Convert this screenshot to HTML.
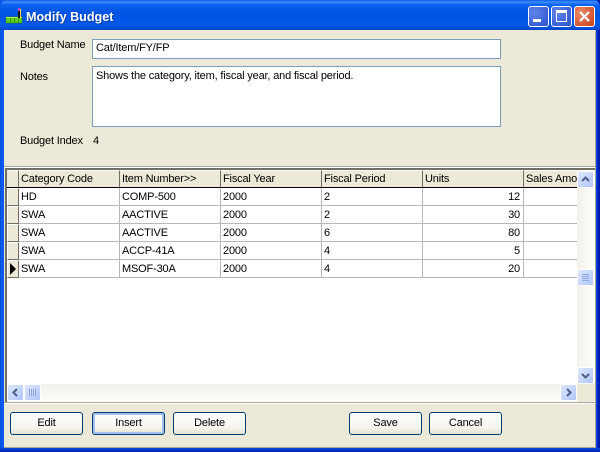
<!DOCTYPE html>
<html><head><meta charset="utf-8"><style>
*{box-sizing:border-box}
html,body{margin:0;padding:0}
body{width:600px;height:452px;position:relative;overflow:hidden;background:linear-gradient(90deg,#0842d0 0,#0c5cf0 1px,#0a58ec 3px,#0a50e4 596px,#0636d0 597px,#0018a8 599px);font:11px/14px "Liberation Sans",sans-serif;letter-spacing:-.17px;color:#000}
.a{position:absolute}
.t{position:absolute;white-space:nowrap;line-height:14px}
#tb{left:0;top:0;width:600px;height:30px;border-radius:7px 7px 0 0;background:linear-gradient(#0a5ae8 0,#3a8cf8 2px,#0a60ee 5px,#0254e2 14px,#0258ea 24px,#0450d8 28px,#0346c8 30px)}
#bb{left:0;top:448px;width:600px;height:4px;background:linear-gradient(#0a48dc,#0634c4 2px,#001ca8)}
#cl{left:4px;top:30px;width:592px;height:418px;background:#ece9d8;border-right:1px solid #aca899;border-bottom:1px solid #aca899}
.in{position:absolute;background:#fff;border:1px solid #7f9db9}
.h{position:absolute;background:#ece9d8;border-right:1px solid #716f64;border-bottom:1px solid #000;border-top:1px solid #fff;height:18px;padding:1px 0 0 2px;white-space:nowrap;overflow:hidden;top:170px}
.rh{position:absolute;left:7px;width:12px;height:18px;background:#ece9d8;border-top:1px solid #fff;border-left:1px solid #fff;border-right:1px solid #716f64;border-bottom:1px solid #716f64}
.c{position:absolute;height:18px;background:#fff;border-right:1px solid #b8b8b8;border-bottom:1px solid #b8b8b8;padding:2px 2px 0 2px;white-space:nowrap;overflow:hidden}
.r{text-align:right;padding-right:3px}
.sb{position:absolute;width:17px;height:17px;border:1px solid #fff;border-radius:2px;background:linear-gradient(135deg,#dde7fe,#b0c6fa)}
.btn{position:absolute;top:412px;width:73px;height:23px;border:1px solid #003c74;border-radius:3px;background:linear-gradient(#fff,#f5f4ee 70%,#e4e1d4);text-align:center;line-height:21px}
.wb{position:absolute;top:6px;width:21px;height:21px;border:1px solid #fff;border-radius:3px}
</style></head><body>
<div class="a" id="tb"></div>
<div class="a" id="bb"></div>
<svg class="a" style="left:5px;top:6px" width="18" height="18" viewBox="0 0 18 18"><rect x="1" y="11" width="16" height="6" fill="#5ed01a" stroke="#2f7a08" stroke-width=".6"/><rect x="1" y="11" width="16" height="1" fill="#b6f050"/><path d="M5.500 12v5M9.500 12v5M13.500 12v5" stroke="#3b9a10"/><rect x="13" y="2" width="2" height="10" fill="#111"/><rect x="13" y="2" width="2" height="3" fill="#d040c0"/><rect x="15" y="3" width="1" height="9" fill="#e8d040"/></svg>
<div class="t" style="left:26px;top:10px;color:#fff;font-weight:bold;font-size:12.6px;letter-spacing:0;line-height:15px;text-shadow:1px 1px 0 #0a3ca8">Modify Budget</div>
<div class="wb" style="left:528px;background:radial-gradient(circle at 30% 30%,#5f86ea,#2a50cc)"><div class="a" style="left:4px;top:12px;width:8px;height:3px;background:#fff"></div></div>
<div class="wb" style="left:551px;background:radial-gradient(circle at 30% 30%,#5f86ea,#2a50cc)"><div class="a" style="left:4px;top:3px;width:11px;height:12px;border:1px solid #fff;border-top-width:3px"></div></div>
<div class="wb" style="left:574px;background:radial-gradient(circle at 30% 30%,#ea8a68,#c84018)"><svg class="a" style="left:3px;top:3px" width="13" height="13"><path d="M2 2L11 11M11 2L2 11" stroke="#fff" stroke-width="2.2"/></svg></div>

<div class="a" id="cl"></div>
<div class="t" style="left:20px;top:38px">Budget Name</div>
<div class="in" style="left:92px;top:39px;width:409px;height:20px"></div>
<div class="t" style="left:96px;top:41px">Cat/Item/FY/FP</div>
<div class="t" style="left:20px;top:70px">Notes</div>
<div class="in" style="left:92px;top:66px;width:409px;height:61px"></div>
<div class="t" style="left:96px;top:69px">Shows the category, item, fiscal year, and fiscal period.</div>
<div class="t" style="left:20px;top:134px">Budget Index</div>
<div class="t" style="left:93px;top:134px">4</div>

<div class="a" style="left:4px;top:166px;width:591px;height:1px;background:#aca899"></div>
<div class="a" style="left:4px;top:167px;width:591px;height:1px;background:#fff"></div>
<div class="a" style="left:5px;top:168px;width:590px;height:234px;background:#fff;border-left:2px solid #716f64;border-top:2px solid #716f64"></div>

<div class="h" style="left:7px;width:12px"></div>
<div class="h" style="left:19px;width:101px">Category Code</div>
<div class="h" style="left:120px;width:101px">Item Number&gt;&gt;</div>
<div class="h" style="left:221px;width:101px">Fiscal Year</div>
<div class="h" style="left:322px;width:101px">Fiscal Period</div>
<div class="h" style="left:423px;width:101px">Units</div>
<div class="h" style="left:524px;width:53px;border-right:0">Sales Amo</div>

<div class="rh" style="top:188px"></div><div class="c" style="left:19px;top:188px;width:101px">HD</div><div class="c" style="left:120px;top:188px;width:101px">COMP-500</div><div class="c" style="left:221px;top:188px;width:101px">2000</div><div class="c" style="left:322px;top:188px;width:101px">2</div><div class="c r" style="left:423px;top:188px;width:101px">12</div><div class="c" style="left:524px;top:188px;width:53px;border-right:0"></div>
<div class="rh" style="top:206px"></div><div class="c" style="left:19px;top:206px;width:101px">SWA</div><div class="c" style="left:120px;top:206px;width:101px">AACTIVE</div><div class="c" style="left:221px;top:206px;width:101px">2000</div><div class="c" style="left:322px;top:206px;width:101px">2</div><div class="c r" style="left:423px;top:206px;width:101px">30</div><div class="c" style="left:524px;top:206px;width:53px;border-right:0"></div>
<div class="rh" style="top:224px"></div><div class="c" style="left:19px;top:224px;width:101px">SWA</div><div class="c" style="left:120px;top:224px;width:101px">AACTIVE</div><div class="c" style="left:221px;top:224px;width:101px">2000</div><div class="c" style="left:322px;top:224px;width:101px">6</div><div class="c r" style="left:423px;top:224px;width:101px">80</div><div class="c" style="left:524px;top:224px;width:53px;border-right:0"></div>
<div class="rh" style="top:242px"></div><div class="c" style="left:19px;top:242px;width:101px">SWA</div><div class="c" style="left:120px;top:242px;width:101px">ACCP-41A</div><div class="c" style="left:221px;top:242px;width:101px">2000</div><div class="c" style="left:322px;top:242px;width:101px">4</div><div class="c r" style="left:423px;top:242px;width:101px">5</div><div class="c" style="left:524px;top:242px;width:53px;border-right:0"></div>
<div class="rh" style="top:260px"></div><div class="c" style="left:19px;top:260px;width:101px">SWA</div><div class="c" style="left:120px;top:260px;width:101px">MSOF-30A</div><div class="c" style="left:221px;top:260px;width:101px">2000</div><div class="c" style="left:322px;top:260px;width:101px">4</div><div class="c r" style="left:423px;top:260px;width:101px">20</div><div class="c" style="left:524px;top:260px;width:53px;border-right:0"></div>
<svg class="a" style="left:9px;top:263px" width="8" height="12"><path d="M1 0L7 6L1 12Z" fill="#000"/></svg>

<div class="a" style="left:577px;top:170px;width:18px;height:214px;background:linear-gradient(90deg,#f3f1ec,#fdfdfa)"></div>
<div class="a" style="left:7px;top:384px;width:570px;height:18px;background:linear-gradient(#f3f1ec,#fdfdfa)"></div>
<div class="a" style="left:577px;top:384px;width:18px;height:18px;background:#ece9d8"></div>
<div class="sb" style="left:577px;top:171px"><svg width="15" height="15"><path d="M4 9L7.500 5.500L11 9" fill="none" stroke="#4d6185" stroke-width="2"/></svg></div>
<div class="sb" style="left:577px;top:269px"><svg width="15" height="15"><path d="M4 4.500h7M4 6.500h7M4 8.500h7M4 10.500h7" stroke="#8fa8e4"/></svg></div>
<div class="sb" style="left:577px;top:367px"><svg width="15" height="15"><path d="M4 6L7.500 9.500L11 6" fill="none" stroke="#4d6185" stroke-width="2"/></svg></div>
<div class="sb" style="left:7px;top:384px"><svg width="15" height="15"><path d="M9 4L5.500 7.500L9 11" fill="none" stroke="#4d6185" stroke-width="2"/></svg></div>
<div class="sb" style="left:24px;top:384px"><svg width="15" height="15"><path d="M4.500 4v7M6.500 4v7M8.500 4v7M10.500 4v7" stroke="#8fa8e4"/></svg></div>
<div class="sb" style="left:560px;top:384px"><svg width="15" height="15"><path d="M6 4L9.500 7.500L6 11" fill="none" stroke="#4d6185" stroke-width="2"/></svg></div>

<div class="a" style="left:4px;top:402px;width:591px;height:1px;background:#aca899"></div>
<div class="a" style="left:4px;top:403px;width:591px;height:1px;background:#fff"></div>

<div class="btn" style="left:10px">Edit</div>
<div class="btn" style="left:92px;box-shadow:inset 0 0 0 2px #a6c0ec">Insert</div>
<div class="btn" style="left:173px">Delete</div>
<div class="btn" style="left:349px">Save</div>
<div class="btn" style="left:429px">Cancel</div>
</body></html>
